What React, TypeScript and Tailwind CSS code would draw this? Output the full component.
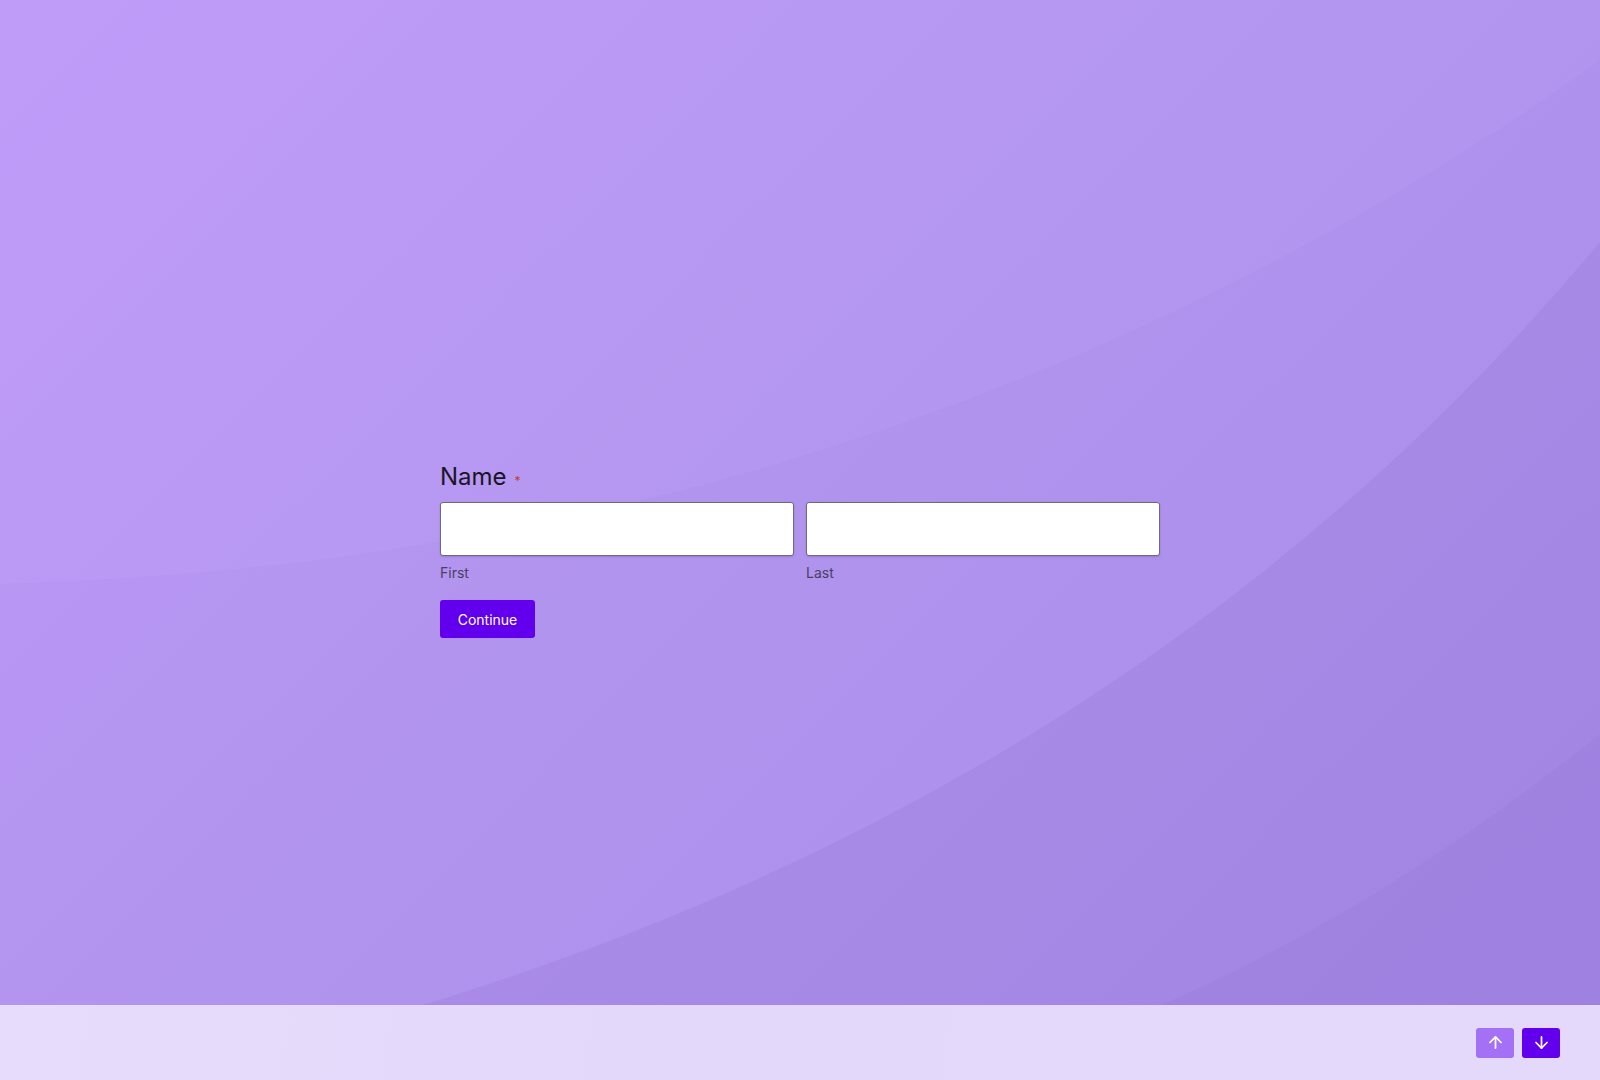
import { ArrowDown, ArrowUp } from "lucide-react";

export default function App() {
  return (
    <div
      className="relative flex h-[1080px] w-full flex-col overflow-hidden bg-[linear-gradient(135deg,#c09cf9_0%,#b497f0_45%,#ab8fea_100%)]"
      style={{ fontFamily: "Inter, 'Noto Sans', sans-serif" }}
    >
      {/* background arcs */}
      <svg
        className="pointer-events-none absolute inset-0 h-full w-full"
        viewBox="0 0 1600 1080"
        preserveAspectRatio="none"
      >
        <path d="M0 584 Q900 560 1600 60 L1600 1080 L0 1080 Z" fill="rgba(90,50,170,0.025)" />
        <path d="M300 1040 Q1113 827 1600 242 L1600 1080 L0 1080 Z" fill="rgba(90,50,170,0.08)" />
        <path d="M1100 1030 Q1348 936 1600 734 L1600 1080 L1000 1080 Z" fill="rgba(90,50,170,0.05)" />
      </svg>

      <main className="relative flex-1 pt-[461px]">
        <div className="mx-auto w-[720px]">
          <div className="flex items-center gap-[8px]">
            <h1 className="text-[24px] leading-[32px] text-[#1b1526]">Name</h1>
            <span className="mt-[8px] text-[12px] leading-none text-[#c23a2a]">*</span>
          </div>
          <div className="mt-[9px] grid grid-cols-2 gap-[12px]">
            <div>
              <input
                type="text"
                className="h-[54px] w-full rounded-[3px] border border-[#6e6a78] bg-white shadow-[0_1px_2px_rgba(0,0,0,0.15)] outline-none"
              />
              <div className="mt-[8px] text-[14px] leading-[18px] text-[#4b3f66]">First</div>
            </div>
            <div>
              <input
                type="text"
                className="h-[54px] w-full rounded-[3px] border border-[#6e6a78] bg-white shadow-[0_1px_2px_rgba(0,0,0,0.15)] outline-none"
              />
              <div className="mt-[8px] text-[14px] leading-[18px] text-[#4b3f66]">Last</div>
            </div>
          </div>
          <button className="mt-[18px] h-[38px] w-[95px] rounded-[3px] bg-[#6200ee] text-[14px] font-normal text-white">
            Continue
          </button>
        </div>
      </main>

      <footer className="relative flex h-[75px] items-center justify-end gap-[8px] bg-[linear-gradient(100deg,#e8dcfc_0%,#e3d8fa_40%,#e4d9fb_100%)] pr-[40px]">
        <button className="flex h-[30px] w-[38px] items-center justify-center rounded-[3px] bg-[#a470f6] text-white">
          <ArrowUp size={19} strokeWidth={2.2} />
        </button>
        <button className="flex h-[30px] w-[38px] items-center justify-center rounded-[3px] bg-[#6200ee] text-white">
          <ArrowDown size={19} strokeWidth={2.2} />
        </button>
      </footer>
    </div>
  );
}
